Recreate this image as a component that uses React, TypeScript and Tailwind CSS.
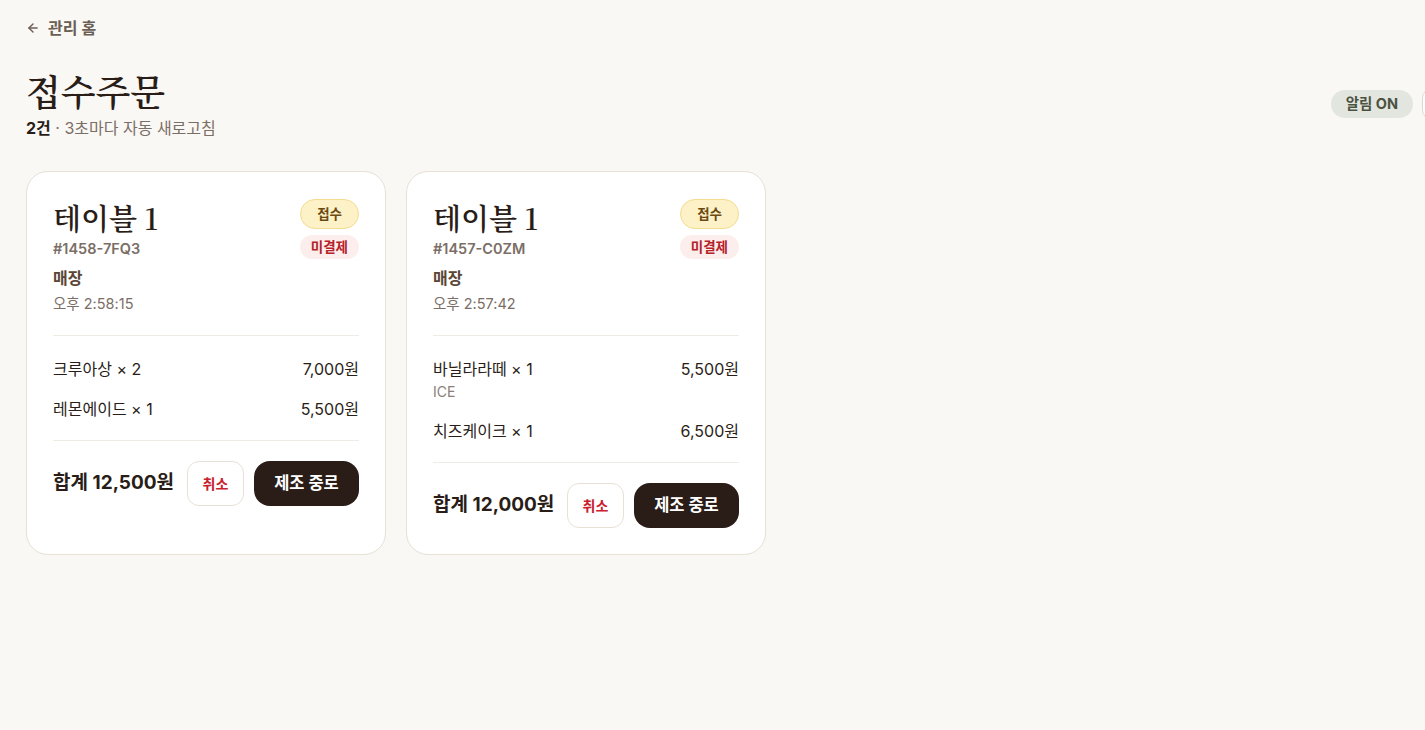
import React from 'react';

type Item = { name: string; qty: number; price: string; option?: string };
type Order = { id: string; table: string; type: string; time: string; items: Item[]; total: string };

const orders: Order[] = [
  {
    id: '#1458-7FQ3',
    table: '테이블 1',
    type: '매장',
    time: '오후 2:58:15',
    items: [
      { name: '크루아상', qty: 2, price: '7,000원' },
      { name: '레몬에이드', qty: 1, price: '5,500원' },
    ],
    total: '12,500원',
  },
  {
    id: '#1457-C0ZM',
    table: '테이블 1',
    type: '매장',
    time: '오후 2:57:42',
    items: [
      { name: '바닐라라떼', qty: 1, price: '5,500원', option: 'ICE' },
      { name: '치즈케이크', qty: 1, price: '6,500원' },
    ],
    total: '12,000원',
  },
];

const sans = "font-['Inter','Noto_Sans_CJK_KR',sans-serif]";
const serif = "font-['Noto_Serif_CJK_KR','Noto_Serif_KR','Liberation_Serif','Noto_Sans_CJK_KR',serif]";

const OrderCard = ({ order }: { order: Order }) => (
  <div className="w-[360px] rounded-[22px] border border-[#e7e1d6] bg-white px-[26px] pt-[26px] pb-[26px] flex flex-col">
    <div className="flex justify-between items-start">
      <div>
        <h2 className={`${serif} text-[29px] font-semibold leading-[40px] text-[#2a1d18]`}>{order.table}</h2>
        <div className="mt-[1px] text-[14.5px] font-semibold text-[#7a6e66] leading-[20px]">{order.id}</div>
        <div className="mt-[9px] text-[16px] font-semibold text-[#5a4636] leading-[20px]">{order.type}</div>
        <div className="mt-[6px] text-[14.5px] text-[#7a6e66] leading-[20px]">{order.time}</div>
      </div>
      <div className="flex flex-col items-end gap-[6px] pt-[1px]">
        <span className="h-[30px] px-[16px] rounded-full border border-[#f3dc8e] bg-[#fdf2c7] text-[13.5px] font-bold text-[#6b4a12] flex items-center">접수</span>
        <span className="h-[24px] px-[11px] rounded-full bg-[#fdeeee] text-[13.5px] font-bold text-[#b4232a] flex items-center">미결제</span>
      </div>
    </div>

    <div className="mt-[21px] border-t border-[#efebe5]" />

    <div className="flex flex-col gap-[18px] pt-[22px] pb-[20px]">
      {order.items.map((it) => (
        <div key={it.name}>
          <div className="flex justify-between text-[16px] leading-[22px] text-[#2a1d18]">
            <span>{it.name} × {it.qty}</span>
            <span>{it.price}</span>
          </div>
          {it.option && <div className="mt-[2px] text-[14px] leading-[20px] text-[#8a7f78]">{it.option}</div>}
        </div>
      ))}
    </div>

    <div className="border-t border-[#efebe5]" />

    <div className="mt-[20px] flex items-center">
      <div className="text-[19px] font-bold text-[#2a1d18]">합계 {order.total}</div>
      <div className="ml-auto flex items-center gap-[10px]">
        <button className="w-[57px] h-[45px] rounded-[12px] border border-[#e7e1d6] bg-white text-[14px] font-semibold text-[#c8202c]">취소</button>
        <button className="w-[105px] h-[45px] rounded-[16px] bg-[#2a1d18] text-[16.5px] font-bold text-white">제조 중로</button>
      </div>
    </div>
  </div>
);

export default function App() {
  return (
    <div className={`${sans} min-h-screen w-full overflow-hidden bg-[#faf8f4]`}>
      <div className="px-[26px] pt-[17px]">
        <a className="inline-flex items-center gap-[8px] text-[16px] font-semibold text-[#6b5e55] leading-[22px]">
          <svg width="14" height="14" viewBox="0 0 24 24" fill="none" stroke="currentColor" strokeWidth="2.4" strokeLinecap="round" strokeLinejoin="round">
            <path d="M19 12H5" />
            <path d="M12 19l-7-7 7-7" />
          </svg>
          관리 홈
        </a>

        <div className="mt-[27px] flex items-center justify-between">
          <div>
            <h1 className={`${serif} text-[36px] font-semibold leading-[46px] text-[#2a1d18]`}>접수주문</h1>
            <div className="mt-[3px] text-[16px] leading-[22px] text-[#7a6e66]">
              <span className="font-bold text-[#2a1d18]">2건</span> · 3초마다 자동 새로고침
            </div>
          </div>
          <div className="flex items-center gap-[9px] mr-[-63px]">
            <span className="h-[28px] px-[15px] rounded-full bg-[#e3e6df] text-[14.5px] font-bold text-[#4b5242] flex items-center">알림 ON</span>
            <button aria-label="새로고침" className="w-[40px] h-[32px] rounded-[10px] border border-[#e0dad0] bg-white flex items-center justify-center" />
          </div>
        </div>

        <div className="mt-[32px] flex items-stretch gap-[20px]">
          {orders.map((o) => (
            <OrderCard key={o.id} order={o} />
          ))}
        </div>
      </div>
    </div>
  );
}
